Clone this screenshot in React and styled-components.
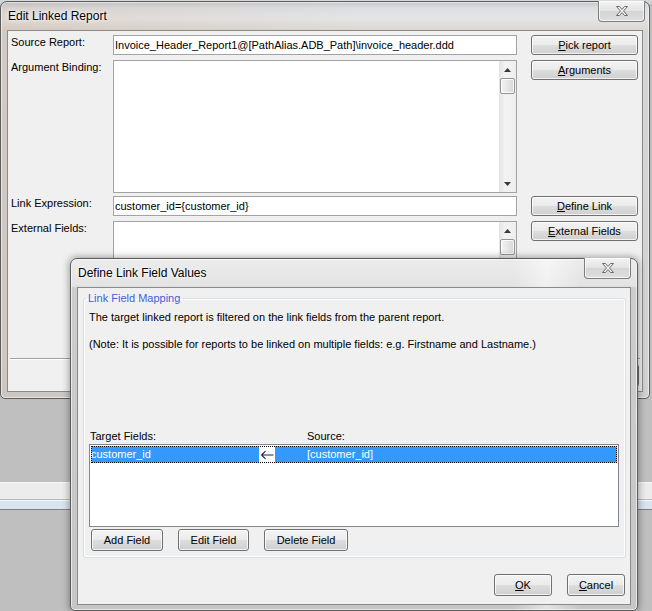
import React from "react";
import styled, { createGlobalStyle } from "styled-components";

const GlobalStyle = createGlobalStyle`
  html, body {
    margin: 0;
    padding: 0;
  }
  body {
    font-family: "Liberation Sans", Arial, sans-serif;
    font-size: 11px;
    color: #000;
    overflow: hidden;
  }
`;

const Desktop = styled.div`
  position: relative;
  width: 652px;
  height: 611px;
  overflow: hidden;
  background: #bfbfbf;
`;

// parts of the application sitting behind the dialogs
const AppHeader = styled.div`
  height: 5px;
  background: linear-gradient(to bottom, #d8d9da, #c9cacb);
  border-bottom: 1px solid #a8a8a8;
`;

const AppStatus = styled.div`
  margin-top: 476px;
  height: 16px;
  background: #ececec;
  border-top: 1px solid #f7f7f7;
  border-bottom: 1px solid #b9b9b9;
`;

const AppTabs = styled.div`
  height: 8px;
  background: #d9e4f1;
  border-top: 1px solid #f4f7fb;
  border-bottom: 1px solid #7f7f7f;
`;

const Frame = styled.div`
  position: absolute;
  box-sizing: border-box;
  display: flex;
  flex-direction: column;
  padding: 0 6px 6px;
  border: 1px solid #5c5c5c;
  border-radius: 7px 7px 5px 5px;
`;

const MainFrame = styled(Frame)`
  left: 0;
  top: 1px;
  width: 650px;
  height: 398px;
  background:
    linear-gradient(to right, rgba(170, 110, 70, 0.12), rgba(170, 110, 70, 0) 55%),
    linear-gradient(to bottom, #c5c8cc 0, #dcdee0 6px, #e5e5e5 16px, #dcd7d1 28px, #d6d6d6 30px, #d2d2d2 100%);
  box-shadow: inset 0 0 0 1px rgba(255, 255, 255, 0.55);
`;

const DialogFrame = styled(Frame)`
  left: 70px;
  top: 258px;
  width: 568px;
  height: 353px;
  padding-bottom: 5px;
  background:
    linear-gradient(to right, rgba(255, 255, 255, 0) 78%, rgba(255, 255, 255, 0.5) 84%, rgba(255, 255, 255, 0) 90%),
    linear-gradient(to bottom, #ececec 0, #e3e3e3 27px, #cdcdcd 29px, #c6c6c6 100%);
  box-shadow: inset 0 0 0 1px rgba(255, 255, 255, 0.6), 0 0 7px 1px rgba(0, 0, 0, 0.35);
`;

const TitleBar = styled.div`
  display: flex;
  align-items: center;
  height: ${(p) => p.$h}px;
  flex-shrink: 0;
`;

const Title = styled.div`
  padding-left: 1px;
  font-size: 12px;
  color: #000;
  text-shadow: 0 0 6px #fff, 0 0 3px #fff;
`;

const CloseButton = styled.div`
  align-self: flex-start;
  margin-left: auto;
  margin-top: -1px;
  margin-right: ${(p) => p.$nudge}px;
  box-sizing: border-box;
  width: 47px;
  height: 21px;
  display: flex;
  align-items: center;
  justify-content: center;
  border: 1px solid #7d7d7d;
  border-top: none;
  border-radius: 0 0 4px 4px;
  background: linear-gradient(to bottom, #f4f4f4, #e2e2e2 50%, #d5d5d5 51%, #dedede);
  box-shadow: inset 0 0 0 1px rgba(255, 255, 255, 0.7);
`;

const CloseGlyph = () => (
  <svg width="14" height="12" viewBox="0 0 14 12">
    <path
      d="M1.5 1.5h3l2.5 3 2.5-3h3l-4 4.5 4 4.5h-3l-2.5-3-2.5 3h-3l4-4.5z"
      fill="#f6f6f6"
      stroke="#6a6a6a"
      strokeWidth="1"
      strokeLinejoin="round"
    />
  </svg>
);

const Client = styled.div`
  flex: 1;
  min-height: 0;
  display: flex;
  flex-direction: column;
  background: #f0f0f0;
  border: 1px solid #8a8a8a;
`;

/* ---------- Edit Linked Report ---------- */

const Form = styled.div`
  display: grid;
  grid-template-columns: 102px 404px 1fr;
  grid-template-rows: 20px 131px 20px 127px;
  row-gap: 5px;
  padding: 4px 4px 0 3px;
  align-items: start;
`;

const Label = styled.div`
  line-height: 14px;
  white-space: nowrap;
`;

const TextBox = styled.div`
  box-sizing: border-box;
  height: 20px;
  padding-left: 1px;
  line-height: 18px;
  border: 1px solid #a3a3a3;
  background: #fff;
  white-space: nowrap;
  overflow: hidden;
`;

const TextArea = styled.div`
  box-sizing: border-box;
  height: ${(p) => p.$h}px;
  display: flex;
  justify-content: flex-end;
  border: 1px solid #a3a3a3;
  background: #fff;
`;

const ScrollTrack = styled.div`
  width: 17px;
  display: flex;
  flex-direction: column;
  background: linear-gradient(to right, #e4e4e4, #f3f3f3 35%, #eeeeee);
`;

const ScrollArrow = styled.div`
  height: 17px;
  flex-shrink: 0;
  display: flex;
  align-items: center;
  justify-content: center;
`;

const ScrollThumb = styled.div`
  box-sizing: border-box;
  height: 16px;
  margin: 0 1px;
  flex-shrink: 0;
  border: 1px solid #959595;
  border-radius: 2px;
  background: linear-gradient(to right, #f3f3f3, #e6e6e6 50%, #d8d8d8);
  box-shadow: inset 0 0 0 1px rgba(255, 255, 255, 0.8);
`;

const ScrollGap = styled.div`
  flex: 1;
`;

const Arrow = ({ down }) => (
  <svg width="7" height="4" viewBox="0 0 7 4">
    <path d={down ? "M0 0h7l-3.5 4z" : "M0 4h7l-3.5-4z"} fill="#3a3a3a" />
  </svg>
);

const Scrollbar = () => (
  <ScrollTrack>
    <ScrollArrow>
      <Arrow />
    </ScrollArrow>
    <ScrollThumb />
    <ScrollGap />
    <ScrollArrow>
      <Arrow down />
    </ScrollArrow>
  </ScrollTrack>
);

const Button = styled.button`
  box-sizing: border-box;
  width: ${(p) => p.$w}px;
  height: ${(p) => p.$h || 20}px;
  padding: 0;
  display: flex;
  align-items: center;
  justify-content: center;
  justify-self: end;
  font-family: "Liberation Sans", Arial, sans-serif;
  font-size: 11px;
  color: #000;
  border: 1px solid #707070;
  border-radius: 3px;
  background: linear-gradient(to bottom, #f3f3f3 0%, #ebebeb 48%, #dddddd 52%, #cfcfcf 100%);
  box-shadow: inset 0 0 0 1px rgba(255, 255, 255, 0.75);
  flex-shrink: 0;

  u {
    text-underline-offset: 1px;
  }
`;

const Separator = styled.div`
  margin: 10px 2px 0 2px;
  height: 1px;
  background: #a0a0a0;
  border-bottom: 1px solid #fff;
`;

const ButtonRow = styled.div`
  display: flex;
  justify-content: ${(p) => p.$justify || "flex-end"};
  gap: ${(p) => p.$gap}px;
  padding: ${(p) => p.$pad};
`;

/* ---------- Define Link Field Values ---------- */

const DialogBody = styled.div`
  padding: 3px 4px 0 5px;
`;

const GroupBox = styled.fieldset`
  margin: 0;
  min-width: 0;
  padding: 0 6px 6px 5px;
  border: 1px solid #d5dfe5;
  border-radius: 3px;
  box-shadow: inset 0 0 0 1px #fff;
`;

const GroupLegend = styled.legend`
  margin-left: -3px;
  padding: 0 2px;
  line-height: 14px;
  color: #3b5fd9;
`;

const Para = styled.div`
  margin-top: ${(p) => p.$top}px;
  line-height: 14px;
  white-space: nowrap;
`;

const ListHeader = styled.div`
  display: grid;
  grid-template-columns: 217px 1fr;
  margin-top: 78px;
  line-height: 14px;
  padding-left: 1px;
`;

const ListBox = styled.div`
  box-sizing: border-box;
  height: 83px;
  margin-top: 1px;
  padding: 1px;
  border: 1px solid #828790;
  background: #fff;
`;

const ListRow = styled.div`
  display: grid;
  grid-template-columns: 168px 16px 1fr;
  height: 17px;
  line-height: 16px;
  color: #fff;
  background: #3399ff;
  box-shadow: inset 0 0 0 1px #f0a040;
  outline: 1px dotted #000;
  outline-offset: -1px;
  white-space: nowrap;
`;

const LinkCell = styled.div`
  display: flex;
  align-items: center;
  justify-content: center;
  background: #fff;
`;

const SourceCell = styled.div`
  padding-left: 32px;
`;

const LinkArrow = () => (
  <svg width="14" height="10" viewBox="0 0 14 10">
    <path d="M1.5 5H13.5M1.5 5L5.5 1.2M1.5 5L5.5 8.8" fill="none" stroke="#1f1f4f" strokeWidth="1.1" />
  </svg>
);

export default function App() {
  return (
    <>
      <GlobalStyle />
      <Desktop>
        <AppHeader />
        <AppStatus />
        <AppTabs />

        <MainFrame>
          <TitleBar $h={28}>
            <Title>Edit Linked Report</Title>
            <CloseButton $nudge={-2}>
              <CloseGlyph />
            </CloseButton>
          </TitleBar>
          <Client>
            <Form>
              <Label>Source Report:</Label>
              <TextBox>Invoice_Header_Report1@[PathAlias.ADB_Path]\invoice_header.ddd</TextBox>
              <Button $w={107}>
                <span><u>P</u>ick report</span>
              </Button>

              <Label>Argument Binding:</Label>
              <TextArea $h={133}>
                <Scrollbar />
              </TextArea>
              <Button $w={107}>
                <span><u>A</u>rguments</span>
              </Button>

              <Label>Link Expression:</Label>
              <TextBox>customer_id={"{customer_id}"}</TextBox>
              <Button $w={107}>
                <span><u>D</u>efine Link</span>
              </Button>

              <Label>External Fields:</Label>
              <TextArea $h={127}>
                <Scrollbar />
              </TextArea>
              <Button $w={107}>
                <span><u>E</u>xternal Fields</span>
              </Button>
            </Form>
            <Separator />
            <ButtonRow $gap={6} $pad="4px 3px 0 0">
              <Button $w={78} $h={23}>
                <span><u>O</u>K</span>
              </Button>
              <Button $w={78} $h={23}>
                <span><u>C</u>ancel</span>
              </Button>
            </ButtonRow>
          </Client>
        </MainFrame>

        <DialogFrame>
          <TitleBar $h={28}>
            <Title>Define Link Field Values</Title>
            <CloseButton $nudge={0}>
              <CloseGlyph />
            </CloseButton>
          </TitleBar>
          <Client>
            <DialogBody>
              <GroupBox>
                <GroupLegend>Link Field Mapping</GroupLegend>
                <Para $top={5}>The target linked report is filtered on the link fields from the parent report.</Para>
                <Para $top={13}>
                  (Note: It is possible for reports to be linked on multiple fields: e.g. Firstname and Lastname.)
                </Para>
                <ListHeader>
                  <span>Target Fields:</span>
                  <span>Source:</span>
                </ListHeader>
                <ListBox>
                  <ListRow>
                    <span>customer_id</span>
                    <LinkCell>
                      <LinkArrow />
                    </LinkCell>
                    <SourceCell>[customer_id]</SourceCell>
                  </ListRow>
                </ListBox>
                <ButtonRow $justify="flex-start" $gap={15} $pad="2px 0 0 2px">
                  <Button $w={72} $h={22}>Add Field</Button>
                  <Button $w={71} $h={22}>Edit Field</Button>
                  <Button $w={84} $h={22}>Delete Field</Button>
                </ButtonRow>
              </GroupBox>
            </DialogBody>
            <ButtonRow $gap={15} $pad="16px 5px 0 0">
              <Button $w={58} $h={22}>
                <span><u>O</u>K</span>
              </Button>
              <Button $w={58} $h={22}>
                <span><u>C</u>ancel</span>
              </Button>
            </ButtonRow>
          </Client>
        </DialogFrame>
      </Desktop>
    </>
  );
}
